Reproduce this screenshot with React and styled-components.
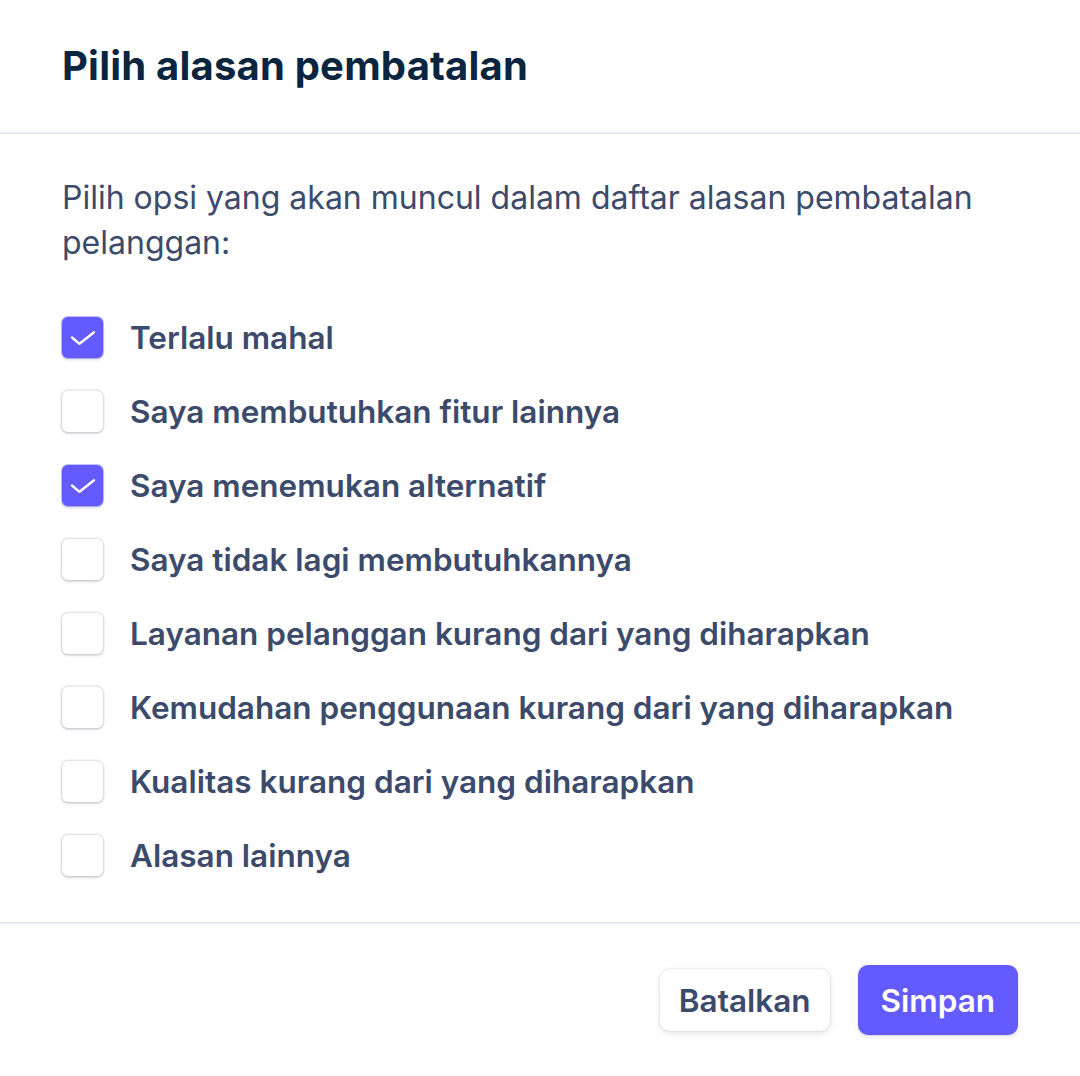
import React from "react";
import styled, { createGlobalStyle } from "styled-components";

const GlobalStyle = createGlobalStyle`
    html, body {
        margin: 0;
        padding: 0;
        background: #ffffff;
    }
    body {
        font-family: Inter, "Noto Sans", "Liberation Sans", sans-serif;
        -webkit-font-smoothing: antialiased;
    }
`;

const Dialog = styled.div`
    width: 1080px;
    height: 1076px;
    display: flex;
    flex-direction: column;
    background: #ffffff;
`;

const Header = styled.div`
    height: 134px;
    padding: 0 62px;
    display: flex;
    align-items: center;
    border-bottom: 2px solid #e6ebf1;
    box-sizing: border-box;
`;

const Title = styled.h1`
    margin: 0;
    margin-top: -2px;
    font-size: 40px;
    font-weight: 700;
    color: #0a2540;
    letter-spacing: 0.2px;
`;

const Body = styled.div`
    padding: 41px 62px 0 62px;
    height: 790px;
    box-sizing: border-box;
    border-bottom: 2px solid #e6ebf1;
`;

const Description = styled.p`
    margin: 0 0 52px 0;
    font-size: 32px;
    line-height: 45px;
    color: #3c4a6b;
    max-width: 940px;
`;

const OptionList = styled.div`
    display: flex;
    flex-direction: column;
    gap: 33px;
`;

const Option = styled.label`
    display: flex;
    align-items: center;
    gap: 27px;
    height: 41px;
`;

const Box = styled.span`
    width: 41px;
    height: 41px;
    box-sizing: border-box;
    border-radius: 6px;
    display: flex;
    align-items: center;
    justify-content: center;
    background: ${(p) => (p.checked ? "#635bff" : "#ffffff")};
    box-shadow: ${(p) =>
        p.checked
            ? "0 2px 3px rgba(60, 66, 87, 0.18), 0 0 0 1px rgba(99, 91, 255, 0.4)"
            : "0 2px 3px rgba(60, 66, 87, 0.14), 0 0 0 1.5px rgba(60, 66, 87, 0.12)"};
`;

const Label = styled.span`
    font-size: 31.5px;
    font-weight: 600;
    color: #3c4a6b;
`;

const Footer = styled.div`
    flex: 1;
    display: flex;
    justify-content: flex-end;
    align-items: center;
    gap: 28px;
    padding: 0 62px 0 0;
    background: #ffffff;
`;

const Button = styled.button`
    font-family: inherit;
    font-size: 31.5px;
    font-weight: 600;
    border: none;
    border-radius: 10px;
    cursor: pointer;
    height: ${(p) => (p.primary ? "70px" : "62px")};
    padding: 0 ${(p) => (p.primary ? "23px" : "19px")};
    color: ${(p) => (p.primary ? "#ffffff" : "#3c4a6b")};
    background: ${(p) => (p.primary ? "#635bff" : "#ffffff")};
    box-shadow: ${(p) =>
        p.primary
            ? "0 2px 5px rgba(60, 66, 87, 0.12), 0 1px 1px rgba(0, 0, 0, 0.08)"
            : "0 2px 6px rgba(60, 66, 87, 0.16), 0 0 0 1px rgba(60, 66, 87, 0.06)"};
`;

function Check() {
    return (
        <svg width="26" height="16" viewBox="0 0 26 16" fill="none">
            <path
                d="M2 7.5 L9.5 13.8 L24 2.2"
                stroke="#ffffff"
                strokeWidth="2.4"
                strokeLinecap="round"
                strokeLinejoin="round"
            />
        </svg>
    );
}

const options = [
    { text: "Terlalu mahal", checked: true },
    { text: "Saya membutuhkan fitur lainnya", checked: false },
    { text: "Saya menemukan alternatif", checked: true },
    { text: "Saya tidak lagi membutuhkannya", checked: false },
    { text: "Layanan pelanggan kurang dari yang diharapkan", checked: false },
    { text: "Kemudahan penggunaan kurang dari yang diharapkan", checked: false },
    { text: "Kualitas kurang dari yang diharapkan", checked: false },
    { text: "Alasan lainnya", checked: false },
];

export default function App() {
    return (
        <Dialog>
            <GlobalStyle />
            <Header>
                <Title>Pilih alasan pembatalan</Title>
            </Header>
            <Body>
                <Description>
                    Pilih opsi yang akan muncul dalam daftar alasan pembatalan
                    pelanggan:
                </Description>
                <OptionList>
                    {options.map((o) => (
                        <Option key={o.text}>
                            <Box checked={o.checked}>{o.checked && <Check />}</Box>
                            <Label>{o.text}</Label>
                        </Option>
                    ))}
                </OptionList>
            </Body>
            <Footer>
                <Button>Batalkan</Button>
                <Button primary>Simpan</Button>
            </Footer>
        </Dialog>
    );
}
